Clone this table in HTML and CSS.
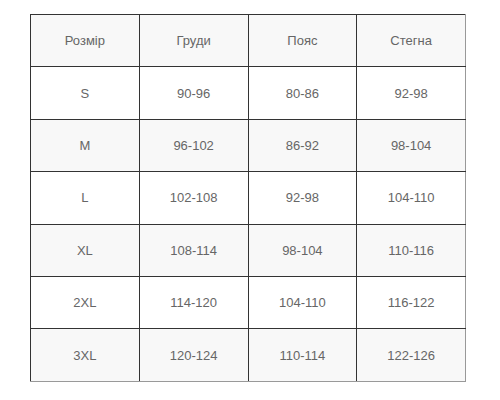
FILE: index.html
```html
<!DOCTYPE html>
<html>
<head>
<meta charset="utf-8">
<link rel="stylesheet" href="styles.css">
</head>
<body>
<div class="wrap">
<table class="sizes">
<tr class="head"><td>Розмір</td><td>Груди</td><td>Пояс</td><td>Стегна</td></tr>
<tr><td>S</td><td>90-96</td><td>80-86</td><td>92-98</td></tr>
<tr class="alt"><td>M</td><td>96-102</td><td>86-92</td><td>98-104</td></tr>
<tr><td>L</td><td>102-108</td><td>92-98</td><td>104-110</td></tr>
<tr class="alt"><td>XL</td><td>108-114</td><td>98-104</td><td>110-116</td></tr>
<tr><td>2XL</td><td>114-120</td><td>104-110</td><td>116-122</td></tr>
<tr class="alt"><td>3XL</td><td>120-124</td><td>110-114</td><td>122-126</td></tr>
</table>
</div>
</body>
</html>
```
FILE: styles.css
```css
html, body {
  margin: 0;
  padding: 0;
  background: #fff;
}
.wrap {
  padding: 14px 0 0 30px;
}
.sizes {
  border-collapse: collapse;
  table-layout: fixed;
  width: 436px;
  font-family: "Liberation Sans", Arial, sans-serif;
  font-size: 13px;
  color: #666;
}
.sizes td {
  border: 1px solid #333;
  text-align: center;
  vertical-align: middle;
  height: 51.4px;
  padding: 0;
}
.sizes td:last-child {
  border-right-color: #999;
}
.sizes tr:last-child td {
  border-bottom-color: #999;
}
.head td, .alt td {
  background: #f8f8f8;
}
```
